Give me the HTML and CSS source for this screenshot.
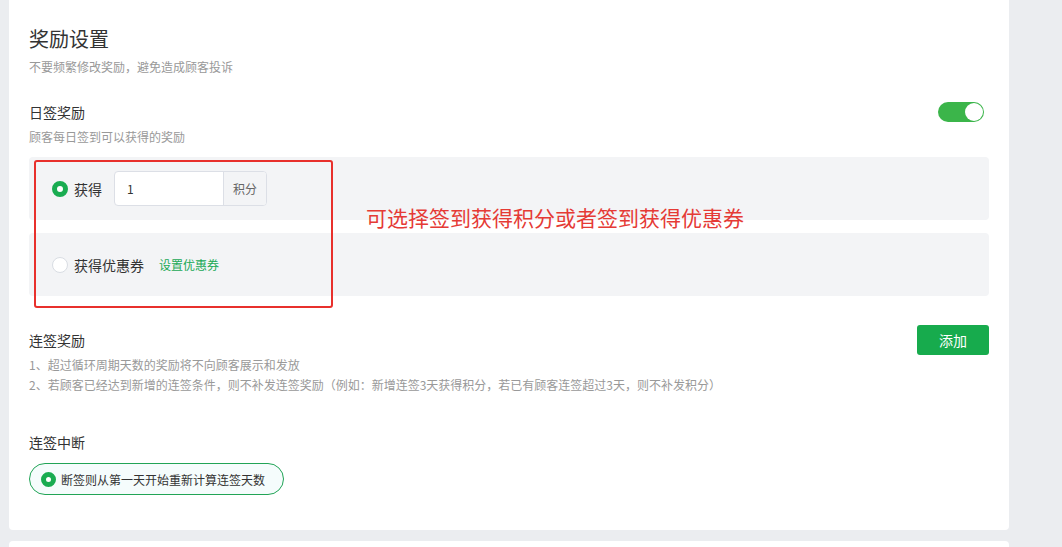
FILE: index.html
```html
<!DOCTYPE html>
<html lang="zh-CN">
<head>
<meta charset="utf-8">
<link rel="stylesheet" href="styles.css">
</head>
<body>
<div class="page">
  <div class="card">
    <h1 class="title">奖励设置</h1>
    <p class="hint">不要频繁修改奖励，避免造成顾客投诉</p>

    <div class="row-head daily">
      <span class="label">日签奖励</span>
      <span class="switch"><span class="knob"></span></span>
    </div>
    <p class="hint">顾客每日签到可以获得的奖励</p>

    <div class="options">
      <div class="opt">
        <span class="radio checked"></span>
        <span class="opt-text">获得</span>
        <div class="input-group">
          <span class="input-val">1</span>
          <span class="addon">积分</span>
        </div>
      </div>
      <div class="opt">
        <span class="radio"></span>
        <span class="opt-text">获得优惠券</span>
        <span class="link">设置优惠券</span>
      </div>
      <div class="annot-box"></div>
      <div class="annot-text">可选择签到获得积分或者签到获得优惠券</div>
    </div>

    <div class="row-head streak">
      <span class="label">连签奖励</span>
      <button class="btn-add">添加</button>
    </div>
    <p class="note">1、超过循环周期天数的奖励将不向顾客展示和发放</p>
    <p class="note">2、若顾客已经达到新增的连签条件，则不补发连签奖励（例如：新增连签3天获得积分，若已有顾客连签超过3天，则不补发积分）</p>

    <div class="label break-label">连签中断</div>
    <div class="pill">
      <span class="radio checked small"></span>
      <span class="pill-text">断签则从第一天开始重新计算连签天数</span>
    </div>
  </div>
  <div class="card next"></div>
</div>
</body>
</html>
```

FILE: styles.css
```css
* { box-sizing: border-box; }
html, body {
  margin: 0;
  padding: 0;
  background: #ebedf0;
  font-family: "Noto Sans CJK SC", "Noto Sans", "Liberation Sans", sans-serif;
  color: #333;
}
.page {
  width: 1062px;
  height: 547px;
  overflow: hidden;
  padding-left: 9px;
}
.card {
  width: 1000px;
  background: #fff;
  border-radius: 0 0 4px 4px;
  padding: 25px 20px 35px 20px;
  position: relative;
}
.card.next {
  margin-top: 11px;
  height: 40px;
  border-radius: 4px;
  padding: 0;
}
.title {
  margin: 0;
  font-size: 20px;
  font-weight: 400;
  line-height: 28px;
  color: #333;
}
.hint {
  margin: 5px 0 0 0;
  font-size: 12px;
  line-height: 18px;
  color: #999;
}
.label {
  font-size: 14px;
  line-height: 20px;
  color: #333;
}
.row-head {
  display: flex;
  justify-content: space-between;
  align-items: center;
}
.row-head.daily {
  margin-top: 26px;
  padding-right: 5px;
}
.switch {
  width: 46px;
  height: 20px;
  border-radius: 10px;
  background: #3bb54a;
  position: relative;
  display: inline-block;
}
.knob {
  position: absolute;
  right: 1px;
  top: 1px;
  width: 18px;
  height: 18px;
  border-radius: 50%;
  background: #fff;
}
.row-head.daily + .hint { margin-top: 6px; }

.options {
  position: relative;
  margin-top: 11px;
  display: flex;
  flex-direction: column;
  gap: 13px;
}
.opt {
  height: 63px;
  background: #f3f4f6;
  border-radius: 4px;
  display: flex;
  align-items: center;
  padding-left: 23px;
}
.radio {
  width: 16px;
  height: 16px;
  border-radius: 50%;
  border: 1px solid #d9dde3;
  background: #fff;
  display: inline-block;
  flex: none;
}
.radio.checked {
  border: 5px solid #19ac51;
  background: #fff;
}
.opt-text {
  margin-left: 6px;
  font-size: 14px;
  color: #333;
}
.input-group {
  margin-left: 12px;
  display: flex;
  height: 35px;
  border: 1px solid #dcdfe6;
  border-radius: 4px;
  overflow: hidden;
  background: #fff;
}
.input-val {
  width: 108px;
  padding-left: 12px;
  font-size: 12px;
  line-height: 33px;
  color: #333;
}
.addon {
  width: 43px;
  border-left: 1px solid #dcdfe6;
  background: #f3f4f6;
  font-size: 12px;
  line-height: 33px;
  color: #666;
  text-align: center;
}
.link {
  margin-left: 15px;
  font-size: 12px;
  color: #1aa956;
}
.annot-box {
  position: absolute;
  left: 5px;
  top: 3px;
  width: 299px;
  height: 148px;
  border: 2px solid #e8302c;
  border-radius: 3px;
  pointer-events: none;
}
.annot-text {
  position: absolute;
  left: 337px;
  top: 46px;
  font-size: 21px;
  line-height: 28px;
  color: #e53a35;
  white-space: nowrap;
}

.row-head.streak {
  margin-top: 28px;
}
.btn-add {
  width: 72px;
  height: 30px;
  border: none;
  border-radius: 3px;
  background: #17ab4d;
  color: #fff;
  font-family: inherit;
  font-size: 14px;
  padding: 0;
  margin-top: 1px;
}
.note {
  margin: 0;
  font-size: 12px;
  line-height: 20px;
  color: #999;
}
.break-label {
  margin-top: 37px;
}
.pill {
  margin-top: 11px;
  width: 255px;
  height: 32px;
  border: 1px solid #21a456;
  border-radius: 16px;
  background: #f5fcfc;
  display: flex;
  align-items: center;
  padding-left: 11px;
}
.radio.small {
  width: 15px;
  height: 15px;
  border-width: 5px;
}
.pill-text {
  margin-left: 5px;
  font-size: 12px;
  color: #333;
}
```
